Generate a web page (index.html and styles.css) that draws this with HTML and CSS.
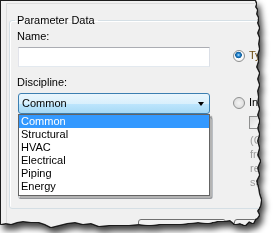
FILE: index.html
```html
<!DOCTYPE html>
<html>
  <head>
    <title>Parameter Properties</title>
    <link rel="stylesheet" href="styles.css">
  </head>

  <body>
    <div class="paper">
      <div class="sheet">
        <div class="frame">
          <fieldset class="group">
            <legend>Parameter Data</legend>
            <div class="cols">
              <div class="left">
                <label class="lbl" for="name">Name:</label>
                <input class="field" id="name" type="text" />

                <label class="lbl">Discipline:</label>
                <div class="combo">
                  <span>Common</span>
                  <span class="arrow"></span>
                </div>
                <div class="behind"></div>

                <ul class="dropdown">
                  <li class="active">Common</li>
                  <li>Structural</li>
                  <li>HVAC</li>
                  <li>Electrical</li>
                  <li>Piping</li>
                  <li>Energy</li>
                </ul>
              </div>

              <div class="right">
                <div class="opt first">
                  <span class="radio checked"></span>
                  <span class="opt-text type">Type</span>
                </div>
                <div class="opt second">
                  <span class="radio"></span>
                  <span class="opt-text">Instance</span>
                </div>
                <div class="check-row">
                  <span class="check"></span>
                </div>
                <div class="note">
                  <span>(Can vary</span>
                  <span>from</span>
                  <span>reporting</span>
                  <span>sets</span>
                </div>
              </div>
            </div>
          </fieldset>

          <div class="buttons">
            <button class="btn wide">OK</button>
            <button class="btn">Cancel</button>
          </div>
        </div>
      </div>
    </div>
  </body>
</html>
```

FILE: styles.css
```css
/* torn dialog screenshot */
body {
  margin: 0;
  background: #fff;
  font-family: "Liberation Sans", Arial, sans-serif;
  font-size: 11px;
  color: #000;
}

.paper {
  margin: 1px 0 0 1px;
  width: 266px;
  height: 232px;
  filter: drop-shadow(-1px 0 0 #1c1c1c) drop-shadow(0 -1px 0 #1c1c1c)
    drop-shadow(1px 0 0 #1c1c1c) drop-shadow(0 1px 0 #1c1c1c)
    drop-shadow(3px 5px 3px rgba(0, 0, 0, 0.75));
}

.sheet {
  width: 100%;
  height: 100%;
  background: #f0f0f0;
  overflow: hidden;
  clip-path: polygon(
    0 0, 254px 0, 255px 3px, 254px 6px, 256px 9px, 255px 13px, 257px 17px,
    256px 22px, 258px 27px, 256px 32px, 258px 37px, 257px 43px, 258px 48px,
    256px 54px, 257px 60px, 255px 66px, 258px 72px, 256px 78px, 258px 84px,
    256px 90px, 257px 96px, 256px 102px, 258px 108px, 256px 114px,
    258px 120px, 256px 127px, 258px 133px, 256px 140px, 258px 147px,
    256px 154px, 259px 160px, 256px 167px, 258px 174px, 255px 180px,
    257px 187px, 258px 193px, 260px 199px, 259px 205px, 256px 210px,
    258px 214px, 256px 217px, 254px 218px, 252px 222px, 248px 220px,
    244px 224px, 239px 222px, 234px 223px, 229px 219px, 223px 220px,
    216px 220px, 207px 222px, 197px 221px, 187px 222px, 178px 223px,
    168px 223px, 158px 223px, 148px 224px, 138px 223px, 128px 224px,
    118px 224px, 108px 224px, 98px 225px, 90px 222px, 82px 223px,
    74px 221px, 66px 222px, 58px 224px, 50px 226px, 44px 223px, 38px 221px,
    30px 221px, 22px 220px, 16px 221px, 10px 223px, 5px 222px, 0 223px
  );
}

.frame {
  margin: 2px 0 0 5px;
  border-top: 1px solid #dcdcdc;
  border-left: 1px solid #dcdcdc;
  height: 240px;
}

.group {
  margin: 9px 0 0 2px;
  padding: 0 0 9px 7px;
  width: 300px;
  min-width: 0;
  border: 1px solid #d5dfe5;
  border-radius: 3px;
  box-shadow: inset 1px 1px 0 #fff;
}

.group legend {
  padding: 0 3px 0 2px;
  margin-left: -2px;
  line-height: 14px;
  font-size: 11px;
}

.cols {
  display: grid;
  grid-template-columns: 196px 1fr;
  column-gap: 20px;
}

.left {
  position: relative;
  display: flex;
  flex-direction: column;
}

.lbl {
  display: block;
  line-height: 15px;
}

.lbl:first-child {
  margin-top: 2px;
}

.field {
  margin: 3px 0 8px 1px;
  width: 192px;
  height: 20px;
  padding: 0 3px;
  box-sizing: border-box;
  border: 1px solid;
  border-color: #abadb3 #dbdfe6 #e3e9ef #e2e3ea;
  background: #fff;
  font: inherit;
}

.combo {
  margin: 3px 0 0 1px;
  width: 192px;
  height: 21px;
  box-sizing: border-box;
  border: 1px solid #3c7fb1;
  border-radius: 3px;
  background: linear-gradient(#eaf6fd, #d9f0fc 50%, #bee6fd 50%, #a7d9f5);
  display: flex;
  align-items: center;
  justify-content: space-between;
  padding: 0 5px 0 3px;
  line-height: 15px;
}

.arrow {
  width: 0;
  height: 0;
  border-left: 3.5px solid transparent;
  border-right: 3.5px solid transparent;
  border-top: 4px solid #000;
  margin-top: 1px;
}

.behind {
  margin: 3px 0 0 1px;
  width: 195px;
  height: 82px;
  box-sizing: border-box;
  border: 1px solid #c3c7cc;
  border-bottom-color: #9a9da2;
  border-radius: 3px;
}

.dropdown {
  position: absolute;
  top: 87px;
  left: 1px;
  width: 192px;
  margin: 0;
  padding: 0 0 2px;
  list-style: none;
  box-sizing: border-box;
  background: #fff;
  border: 1px solid #646464;
  box-shadow: 2px 2px 1px rgba(0, 0, 0, 0.25);
}

.dropdown li {
  height: 13px;
  line-height: 13px;
  padding-left: 2px;
}

.dropdown .active {
  background: #3399ff;
  color: #fff;
}

.right {
  display: flex;
  flex-direction: column;
  white-space: nowrap;
}

.opt {
  display: flex;
  align-items: center;
  height: 15px;
}

.opt.first {
  margin-top: 21px;
}

.opt.second {
  margin-top: 32px;
}

.radio {
  width: 12px;
  height: 12px;
  box-sizing: border-box;
  border: 1px solid #8e8f8f;
  border-radius: 50%;
  background: radial-gradient(circle at 50% 50%, #f4f4f4, #d6d6d6);
}

.radio.checked {
  background: radial-gradient(circle at 45% 40%, #bfe4fb 0, #2a8ad4 1.5px, #0d5a97 3px, #fff 3.6px, #e8e8e8 100%);
}

.opt-text {
  margin-left: 4px;
  line-height: 15px;
}

.opt-text.type {
  color: #6b4b10;
}

.check-row {
  margin: 6px 0 0 16px;
  height: 13px;
}

.check {
  display: block;
  width: 13px;
  height: 13px;
  box-sizing: border-box;
  border: 1px solid #8e8f8f;
  background: linear-gradient(135deg, #dcdcdc, #fbfbfb);
}

.note {
  display: flex;
  flex-direction: column;
  margin: 4px 0 0 17px;
  line-height: 14px;
  color: #9c9c9c;
}

.buttons {
  display: flex;
  gap: 8px;
  margin: 10px 0 0 131px;
}

.btn {
  width: 88px;
  height: 23px;
  flex: none;
  border: 1px solid #707070;
  border-radius: 3px;
  background: linear-gradient(#f2f2f2, #ebebeb 50%, #dddddd 50%, #cfcfcf);
  font: inherit;
}
```
